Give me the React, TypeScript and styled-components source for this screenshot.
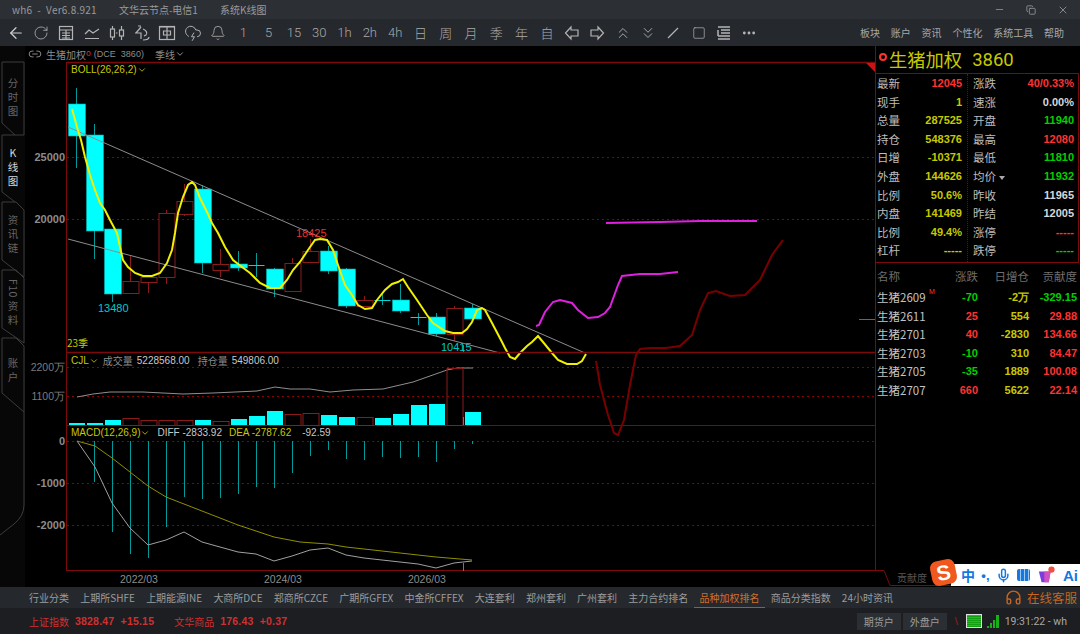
import styled, { createGlobalStyle } from "styled-components";
import {
    ArrowLeft, Bell, ChevronDown, ChevronsDown, ChevronsUp, CloudLightning, Copy, Ellipsis,
    Headphones, Link2, Mic, Minus, RotateCw, Square, X,
} from "lucide-react";

const RED = "#ff3232";
const GREEN = "#00d000";
const YELLOW = "#c8c800";
const WHITE = "#d8d8d8";
const FRAME = "#7d0a0a";
const GRID = "#8b0000";
const CJK = `"Noto Sans CJK SC", "Noto Sans", sans-serif`;
const NUM = `"Liberation Sans", Arial, sans-serif`;

type Candle = { kind: "up" | "down" | "flat"; top: number; bottom: number; high: number; low: number; vol: number; macd: number };

const candles: Candle[] = [
    { kind: "down", top: 104, bottom: 136, high: 88, low: 168, vol: 423, macd: 441 },
    { kind: "down", top: 135, bottom: 231, high: 124, low: 259, vol: 423, macd: 482 },
    { kind: "down", top: 229, bottom: 294, high: 229, low: 302, vol: 420, macd: 532 },
    { kind: "up", top: 281, bottom: 293, high: 256, low: 293, vol: 418, macd: 554 },
    { kind: "up", top: 277, bottom: 282, high: 277, low: 293, vol: 420, macd: 558 },
    { kind: "up", top: 213, bottom: 277, high: 210, low: 284, vol: 420, macd: 527 },
    { kind: "up", top: 201, bottom: 214, high: 184, low: 216, vol: 420, macd: 497 },
    { kind: "down", top: 189, bottom: 263, high: 185, low: 273, vol: 420, macd: 499 },
    { kind: "up", top: 264, bottom: 270, high: 249, low: 277, vol: 421, macd: 498 },
    { kind: "down", top: 264, bottom: 268, high: 251, low: 271, vol: 419, macd: 494 },
    { kind: "flat", top: 265, bottom: 265, high: 253, low: 277, vol: 416, macd: 487 },
    { kind: "down", top: 269, bottom: 289, high: 268, low: 297, vol: 411, macd: 488 },
    { kind: "up", top: 263, bottom: 291, high: 258, low: 292, vol: 414, macd: 473 },
    { kind: "up", top: 251, bottom: 262, high: 239, low: 263, vol: 413, macd: 456 },
    { kind: "down", top: 251, bottom: 271, high: 246, low: 274, vol: 415, macd: 450 },
    { kind: "down", top: 269, bottom: 306, high: 268, low: 308, vol: 417, macd: 459 },
    { kind: "up", top: 300, bottom: 306, high: 296, low: 306, vol: 417, macd: 460 },
    { kind: "flat", top: 300, bottom: 300, high: 293, low: 305, vol: 418, macd: 457 },
    { kind: "down", top: 300, bottom: 311, high: 284, low: 313, vol: 414, macd: 458 },
    { kind: "flat", top: 317, bottom: 317, high: 313, low: 325, vol: 405, macd: 457 },
    { kind: "down", top: 317, bottom: 334, high: 313, low: 336, vol: 404, macd: 462 },
    { kind: "up", top: 308, bottom: 334, high: 306, low: 341, vol: 368, macd: 449 },
    { kind: "down", top: 308, bottom: 319, high: 304, low: 319, vol: 412, macd: 444 },
];

const cx = (i: number) => 76.5 + i * 18;

const bollLine = "72,109 77,127 81,140 85,157 90,175 95,190 100,203 105,210 110,220 117,233 120,247 123,260 128,267 135,273 143,276 152,276 160,273 167,263 172,250 175,233 178,213 183,197 188,185 192,182 195,185 200,198 207,212 212,223 218,233 225,247 233,260 242,267 250,273 260,283 270,288 280,288 287,280 293,270 300,262 308,250 315,240 320,239 327,240 333,250 338,265 345,285 352,295 358,305 365,309 372,308 377,300 385,290 392,284 398,282 403,279 408,287 417,300 427,315 433,323 445,331 453,333 462,333 467,329 472,322 477,310 482,308 485,310 492,323 502,342 505,348 510,357 515,359 520,353 527,346 532,342 538,336 543,342 552,353 558,360 567,364 577,364 582,361 586,354";
const magentaLong = "536,326 539,325 545,312 553,302 560,300 572,303 578,310 588,318 598,317 605,313 610,307 618,285 622,276 640,274 660,274 678,272";
const magentaFlat = "606,223 660,222 700,221 757,221";
const darkRedLine = "596,361 600,385 608,415 614,433 618,435 624,420 630,385 636,355 640,349 650,348 666,348 680,346 692,335 700,310 708,293 716,291 730,296 745,295 760,280 772,255 783,240";
const holdLine = "77,397 93,394 110,392 143,392 183,394 213,393 257,391 275,387 290,389 310,389 330,392 353,390 383,389 413,382 447,370 457,368 473,368";
const diffLine = "77,441 95,467 112,503 130,528 148,545 166,540 184,532 202,542 220,547 238,552 256,554 274,561 292,556 310,550 328,548 346,555 364,558 400,562 418,564 436,568 454,563 472,561";
const deaLine = "77,441 95,446 112,458 130,472 148,486 166,497 184,504 220,518 238,525 274,537 300,542 328,544 346,547 382,551 418,555 436,557 472,560";

const leftQuotes = [
    ["最新", "12045", RED], ["现手", "1", YELLOW], ["总量", "287525", YELLOW], ["持仓", "548376", YELLOW], ["日增", "-10371", YELLOW],
    ["外盘", "144626", YELLOW], ["比例", "50.6%", YELLOW], ["内盘", "141469", YELLOW], ["比例", "49.4%", YELLOW], ["杠杆", "-----", YELLOW],
];
const rightQuotes = [
    ["涨跌", "40/0.33%", RED], ["速涨", "0.00%", WHITE], ["开盘", "11940", GREEN], ["最高", "12080", RED], ["最低", "11810", GREEN],
    ["均价", "11932", GREEN], ["昨收", "11965", WHITE], ["昨结", "12005", WHITE], ["涨停", "-----", RED], ["跌停", "-----", GREEN],
];
const contracts = [
    ["生猪2609", "-70", GREEN, "-2万", "-329.15", GREEN],
    ["生猪2611", "25", RED, "554", "29.88", RED],
    ["生猪2701", "40", RED, "-2830", "134.66", RED],
    ["生猪2703", "-10", GREEN, "310", "84.47", RED],
    ["生猪2705", "-35", GREEN, "1889", "100.08", RED],
    ["生猪2707", "660", RED, "5622", "22.14", RED],
];
const periods = ["1", "5", "15", "30", "1h", "2h", "4h", "日", "周", "月", "季", "年", "自"];
const menus = ["板块", "账户", "资讯", "个性化", "系统工具", "帮助"];
const bottomTabs = ["行业分类", "上期所SHFE", "上期能源INE", "大商所DCE", "郑商所CZCE", "广期所GFEX", "中金所CFFEX", "大连套利", "郑州套利", "广州套利", "主力合约排名", "品种加权排名", "商品分类指数", "24小时资讯"];

function Glyph({ children }: { children: React.ReactNode }) {
    return <svg width="20" height="20" viewBox="0 0 20 20" fill="none" stroke="#b4b4b4" strokeWidth="1.2">{children}</svg>;
}

const toolIcons = [
    <ArrowLeft size={18} color="#d0d0d0" strokeWidth={1.6}/>,
    <RotateCw size={16} color="#b4b4b4" strokeWidth={1.2}/>,
    <Glyph><rect x="3.5" y="3.5" width="13" height="13"/><path d="M3.5 7h13M6 10h8M6 12.5h8M6 15h8M10 7v9"/></Glyph>,
    <Glyph><path d="M3 11l4-4 4 3 6-4M3 15.5h14"/></Glyph>,
    <Glyph><rect x="3.5" y="6" width="4" height="8"/><path d="M5.5 3v3M5.5 14v3M14.500 3v4M14.500 13v4"/><rect x="12.500" y="7" width="4" height="6"/><path d="M9 10h1.500"/></Glyph>,
    <Glyph><path d="M4 10l5-6M9 3h-3M3 10h6v6M11 6c3 1 5 4 3 6l-2 1M11 17c3 0 6-1 6-3"/></Glyph>,
    <Glyph><rect x="2.500" y="3.500" width="15" height="13"/><path d="M10 4v12M6.500 8h7v4h-7zM3 4h14"/></Glyph>,
    <CloudLightning size={18} color="#b4b4b4" strokeWidth={1.3}/>,
    <Bell size={16} color="#b4b4b4" strokeWidth={1.2}/>,
];
const drawIcons = [
    <Glyph><path d="M9 4L3.500 10 9 16v-3h7V7H9z"/></Glyph>,
    <Glyph><path d="M11 4l5.500 6L11 16v-3H4V7h7z"/></Glyph>,
    <ChevronsUp size={18} color="#b4b4b4" strokeWidth={1.2}/>,
    <ChevronsDown size={18} color="#b4b4b4" strokeWidth={1.2}/>,
    <Glyph><path d="M5 15L15 5"/></Glyph>,
    <Square size={14} color="#b4b4b4" strokeWidth={1.2}/>,
    <Glyph><path d="M4 4h12M7 7h9M7 10h9M4 13h12M4 16h12M4 7v6" strokeWidth="1.500"/></Glyph>,
    <Ellipsis size={16} color="#b4b4b4" strokeWidth={2.200}/>,
];

function App() {
    return (
        <Window>
            <GlobalStyle/>
            <TitleBar>
                <TitleText $wide>wh6&nbsp; - &nbsp;Ver6.8.921</TitleText>
                <TitleText>文华云节点-电信1</TitleText>
                <TitleText>系统K线图</TitleText>
                <WindowButtons>
                    <Minus size={11} color="#888"/>
                    <Copy size={10} color="#999"/>
                    <X size={12} color="#888"/>
                </WindowButtons>
            </TitleBar>
            <ToolBar>
                {toolIcons.map((icon, i) => <ToolButton key={i}>{icon}</ToolButton>)}
                {periods.map(p => <ToolButton key={p}>{p}</ToolButton>)}
                {drawIcons.map((icon, i) => <ToolButton key={i}>{icon}</ToolButton>)}
                <MenuList>
                    {menus.map(m => <span key={m}>{m}</span>)}
                </MenuList>
            </ToolBar>
            <Main>
                <SideColumn>
                    <SideOutline viewBox="0 0 25 541">
                        <path d="M24 89V16H2V77L15 89"/>
                        <path d="M24 89H2V146L15 156"/>
                        <path d="M2 156H16l8 8V231L2 214V156"/>
                        <path d="M2 224H16l8 8V297L2 282V224"/>
                        <path d="M2 292H16l8 8V366L2 347V292"/>
                        <path d="M24 366V459Q24 470 14 478L0 489"/>
                    </SideOutline>
                    <SideTab $height={73}>分时图</SideTab>
                    <SideTab $height={67} $active><Upright>K</Upright>线图</SideTab>
                    <SideTab $height={68}>资讯链</SideTab>
                    <SideTab $height={68}><Tight>F10</Tight>资料</SideTab>
                    <SideTab $height={68}>账户</SideTab>
                </SideColumn>
                <ChartColumn>
                    <StockLine>
                        <Link2 size={14} color="#999" strokeWidth={1.5}/>
                        <StockName>生猪加权<sup>o</sup></StockName>
                        <StockCode>(DCE&nbsp; 3860)</StockCode>
                        <StockPeriod>季线<ChevronDown size={10} color="#aaa"/></StockPeriod>
                    </StockLine>
                    <Pane $height={290}>
                        <PaneSvg viewBox="25 62 850 290">
                            <line x1="66" x2="875" y1="62.500" y2="62.500" stroke={FRAME} strokeWidth="1.500"/>
                            <line x1="66.500" x2="66.500" y1="62" y2="352" stroke={FRAME}/>
                            <GridLine y={157}/><GridLine y={219}/>
                            <AxisLabel x={65} y={161}>25000</AxisLabel>
                            <AxisLabel x={65} y={223}>20000</AxisLabel>
                            <path d="M866 63h9v9z" fill="#c81414"/>
                            <line x1="859" x2="875" y1="319.500" y2="319.500" stroke="#666"/>
                            {candles.map((c, i) => <CandleMark key={i} c={c} x={cx(i)}/>)}
                            <line x1="463.500" x2="463.500" y1="345" y2="352" stroke="#777"/>
                            <line x1="68" y1="127" x2="585" y2="353" stroke="#8c8c8c"/>
                            <line x1="68" y1="239" x2="500" y2="353" stroke="#8c8c8c"/>
                            <polyline points={bollLine} fill="none" stroke="#f0f000" strokeWidth="2"/>
                            <PriceTag x={98} y={312} fill="#00c8c8">13480</PriceTag>
                            <PriceTag x={296} y={237} fill="#e83030">18425</PriceTag>
                            <PriceTag x={441} y={351} fill="#00c8c8">10415</PriceTag>
                        </PaneSvg>
                        <BollLegend>BOLL(26,26,2)<ChevronDown size={10}/></BollLegend>
                        <PeriodTag>23季</PeriodTag>
                    </Pane>
                    <Pane $height={74}>
                        <PaneSvg viewBox="25 352 850 74">
                            <line x1="66" x2="875" y1="352.500" y2="352.500" stroke={FRAME} strokeWidth="1.500"/>
                            <line x1="66" x2="875" y1="425.500" y2="425.500" stroke={FRAME} strokeWidth="1.200"/>
                            <line x1="66.500" x2="66.500" y1="352" y2="426" stroke={FRAME}/>
                            <GridLine y={367}/><GridLine y={396}/>
                            <AxisLabel x={65} y={371} $light>2200万</AxisLabel>
                            <AxisLabel x={65} y={400} $light>1100万</AxisLabel>
                            <polyline points={holdLine} fill="none" stroke="#8f8f8f"/>
                            {candles.map((c, i) => c.kind === "up"
                                ? <rect key={i} x={cx(i) - 7.500} y={c.vol + .5} width={16} height={425 - c.vol} fill="none" stroke="#8b1a1a"/>
                                : <rect key={i} x={cx(i) - 7.500} y={c.vol} width={16} height={425 - c.vol} fill="#00ffff"/>)}
                            <line x1="463.500" x2="463.500" y1="417" y2="425" stroke="#777"/>
                        </PaneSvg>
                        <VolumeLegend>
                            <LegendName>CJL<ChevronDown size={10}/></LegendName>
                            <LegendGrey>成交量</LegendGrey><LegendWhite>5228568.00</LegendWhite>
                            <LegendGrey $far>持仓量</LegendGrey><LegendWhite>549806.00</LegendWhite>
                        </VolumeLegend>
                    </Pane>
                    <Pane $height={145}>
                        <PaneSvg viewBox="25 426 850 145">
                            <line x1="66.500" x2="66.500" y1="426" y2="571" stroke={FRAME}/>
                            <line x1="66" x2="875" y1="570.500" y2="570.500" stroke={FRAME} strokeWidth="1.200"/>
                            <GridLine y={441}/><GridLine y={483}/><GridLine y={525}/>
                            <AxisLabel x={65} y={445}>0</AxisLabel>
                            <AxisLabel x={65} y={487}>-1000</AxisLabel>
                            <AxisLabel x={65} y={529}>-2000</AxisLabel>
                            {candles.slice(1).map((c, i) => <line key={i} x1={cx(i + 1)} x2={cx(i + 1)} y1="441" y2={c.macd} stroke="#009a9a"/>)}
                            <polyline points={diffLine} fill="none" stroke="#a0a0a0"/>
                            <polyline points={deaLine} fill="none" stroke="#8f8f00"/>
                            <line x1="463.500" x2="463.500" y1="563" y2="571" stroke="#777"/>
                        </PaneSvg>
                        <MacdLegend>
                            <LegendName>MACD(12,26,9)<ChevronDown size={10}/></LegendName>
                            <LegendWhite>DIFF -2833.92</LegendWhite>
                            <LegendName>DEA -2787.62</LegendName>
                            <LegendWhite>-92.59</LegendWhite>
                        </MacdLegend>
                    </Pane>
                    <TimeAxis>
                        <span>2022/03</span><span>2024/03</span><span>2026/03</span>
                    </TimeAxis>
                    <Annotations viewBox="25 46 850 541">
                        <polyline points={magentaLong} fill="none" stroke="#e020e0" strokeWidth="2"/>
                        <polyline points={magentaFlat} fill="none" stroke="#e020e0" strokeWidth="2"/>
                        <polyline points={darkRedLine} fill="none" stroke="#7a0000" strokeWidth="2"/>
                    </Annotations>
                </ChartColumn>
                <QuotePanel>
                    <QuoteHead>
                        <RedDot/>
                        <QuoteName>生猪加权</QuoteName>
                        <QuoteCode>3860</QuoteCode>
                    </QuoteHead>
                    <QuoteBox>
                        <QuoteColumn>
                            {leftQuotes.map(([name, value, color], i) => (
                                <QuoteRow key={i}><QuoteLabel>{name}</QuoteLabel><QuoteValue $color={color}>{value}</QuoteValue></QuoteRow>
                            ))}
                        </QuoteColumn>
                        <QuoteColumn $divider>
                            {rightQuotes.map(([name, value, color], i) => (
                                <QuoteRow key={i}>
                                    <QuoteLabel>{name}{name === "均价" && <Caret/>}</QuoteLabel>
                                    <QuoteValue $color={color}>{value}</QuoteValue>
                                </QuoteRow>
                            ))}
                        </QuoteColumn>
                    </QuoteBox>
                    <ContractTable>
                        <ContractHead>
                            <span>名称</span><span>涨跌</span><span>日增仓</span><span>贡献度</span>
                        </ContractHead>
                        {contracts.map(([name, change, changeColor, added, weight, weightColor], i) => (
                            <ContractRow key={name}>
                                <ContractName>{name}{i === 0 && <MainMark>M</MainMark>}</ContractName>
                                <QuoteValue $color={changeColor}>{change}</QuoteValue>
                                <QuoteValue $color={YELLOW}>{added}</QuoteValue>
                                <QuoteValue $color={weightColor}>{weight}</QuoteValue>
                            </ContractRow>
                        ))}
                    </ContractTable>
                    <PanelFoot>
                        <FootTab viewBox="0 0 75 17"><path d="M0 .5H8L14 15.500H75" fill="none" stroke={FRAME}/></FootTab>
                        <FootLabel>贡献度</FootLabel>
                    </PanelFoot>
                </QuotePanel>
                <ImeBar>
                    <ImeLogo><span>S</span></ImeLogo>
                    <ImeHan>中</ImeHan>
                    <ImePunct>•,</ImePunct>
                    <Mic size={15} color="#1478e0" strokeWidth={2.400}/>
                    <ImeKeys/>
                    <ImeShape viewBox="0 0 22 20">
                        <path d="M2 6h13l-2 12H5z" fill="#7a3ce0"/>
                        <path d="M8 6h7l-2 12H8z" fill="#d050c0"/>
                        <circle cx="16" cy="4" r="3.500" fill="#f05040"/>
                    </ImeShape>
                    <ImeAi>Ai</ImeAi>
                </ImeBar>
            </Main>
            <BottomTabs>
                {bottomTabs.map(t => <BottomTab key={t} $active={t === "品种加权排名"}>{t}</BottomTab>)}
                <ServiceLink><Headphones size={17} strokeWidth={2}/>在线客服</ServiceLink>
            </BottomTabs>
            <StatusBar>
                <IndexText>上证指数</IndexText>
                <IndexNumber>3828.47&nbsp; +15.15</IndexNumber>
                <IndexText $wide>文华商品</IndexText>
                <IndexNumber>176.43&nbsp; +0.37</IndexNumber>
                <StatusRight>
                    <AccountButton>期货户</AccountButton>
                    <AccountButton>外盘户</AccountButton>
                    <Backslash>\</Backslash>
                    <NetBox/>
                    <Signal viewBox="0 0 14 14">
                        <path d="M1 12h2v2H1zM4 9h2v5H4zM7 6h2v8H7zM10 1h3v13h-3z" fill="#18b018"/>
                    </Signal>
                    <Clock>19:31:22 - wh</Clock>
                </StatusRight>
            </StatusBar>
        </Window>
    );
}

function GridLine({ y }: { y: number }) {
    return <line x1="67" x2="875" y1={y + .5} y2={y + .5} stroke={GRID} strokeDasharray="2 3"/>;
}

function AxisLabel({ x, y, $light, children }: { x: number; y: number; $light?: boolean; children: React.ReactNode }) {
    return (
        <text x={x} y={y} textAnchor="end" fontFamily={NUM} fontSize={$light ? 10.5 : 11} fontWeight={$light ? 400 : 700} fill={$light ? "#7c7c7c" : "#8c8c8c"}>
            {children}
        </text>
    );
}

function PriceTag({ x, y, fill, children }: { x: number; y: number; fill: string; children: React.ReactNode }) {
    return <text x={x} y={y} fontFamily={NUM} fontSize="11" fill={fill}>{children}</text>;
}

function CandleMark({ c, x }: { c: Candle; x: number }) {
    if (c.kind === "flat") {
        return (
            <g stroke="#00d8d8">
                <line x1={x} x2={x} y1={c.high} y2={c.low} stroke="#009a9a"/>
                <line x1={x - 8} x2={x + 8} y1={c.top + .5} y2={c.top + .5}/>
            </g>
        );
    }
    if (c.kind === "up") {
        return (
            <g stroke="#8b1a1a">
                <line x1={x} x2={x} y1={c.high} y2={c.low}/>
                <rect x={x - 7.500} y={c.top + .5} width={16} height={c.bottom - c.top} fill="#000"/>
            </g>
        );
    }
    return (
        <g>
            <line x1={x} x2={x} y1={c.high} y2={c.low} stroke="#009a9a"/>
            <rect x={x - 8} y={c.top} width={17} height={c.bottom - c.top} fill="#00ffff" stroke="#00b0b0" strokeWidth=".6"/>
        </g>
    );
}

const GlobalStyle = createGlobalStyle`
    html, body {
        margin: 0;
        background: #000;
        overflow: hidden;
    }
`;

const Window = styled.div`
    width: 1080px;
    height: 634px;
    display: flex;
    flex-direction: column;
    font-family: ${CJK};
`;

const TitleBar = styled.div`
    height: 19px;
    background: #2c2f34;
    display: flex;
    align-items: center;
    padding-left: 12px;
    gap: 22px;
    color: #9a9a9a;
`;

const TitleText = styled.span<{ $wide?: boolean }>`
    font-size: 10px;
    white-space: nowrap;
    letter-spacing: ${p => p.$wide ? ".25px" : "0"};
`;

const WindowButtons = styled.div`
    margin-left: auto;
    display: flex;
    align-items: center;
    gap: 21px;
    padding-right: 11px;
`;

const ToolBar = styled.div`
    height: 27px;
    background: #25282d;
    display: flex;
    align-items: center;
    padding-left: 3px;
    color: #aaa;
`;

const ToolButton = styled.div`
    flex: 0 0 25.300px;
    height: 27px;
    display: flex;
    align-items: center;
    justify-content: center;
    font-family: "Roboto", ${CJK};
    font-size: 13px;
    font-weight: 300;
`;

const MenuList = styled.div`
    margin-left: auto;
    display: flex;
    gap: 10.800px;
    padding-right: 16px;
    font-size: 10px;
    color: #a8a8a8;
`;

const Main = styled.div`
    position: relative;
    height: 541px;
    display: flex;
    background: #000;
`;

const SideColumn = styled.div`
    position: relative;
    flex: 0 0 25px;
    padding-top: 16px;
    background: #070707;
`;

const SideOutline = styled.svg`
    position: absolute;
    left: 0;
    top: 0;
    width: 25px;
    height: 541px;
    fill: none;
    stroke: #3c3c3c;
`;

const SideTab = styled.div<{ $height: number; $active?: boolean }>`
    position: relative;
    box-sizing: border-box;
    width: 25px;
    height: ${p => p.$height}px;
    display: flex;
    align-items: center;
    justify-content: center;
    padding-left: 1px;
    writing-mode: vertical-rl;
    letter-spacing: 3.500px;
    font-size: 10.500px;
    color: ${p => p.$active ? "#d8d8d8" : "#666"};
`;

const Upright = styled.span`
    text-orientation: upright;
`;

const Tight = styled.span`
    margin-bottom: 3px;
    letter-spacing: .5px;
`;

const ChartColumn = styled.div`
    position: relative;
    flex: 0 0 850px;
    display: flex;
    flex-direction: column;
`;

const StockLine = styled.div`
    height: 16px;
    display: flex;
    align-items: center;
    padding-left: 3px;
    color: #8c8c8c;
    font-size: 10px;
`;

const StockName = styled.span`
    margin-left: 4px;
    font-family: "Noto Sans CJK SC", serif;

    sup {
        color: #d03030;
        font-size: 8px;
        line-height: 0;
        vertical-align: 3px;
    }
`;

const StockCode = styled.span`
    margin-left: 3px;
    font-family: ${NUM};
    font-size: 9px;
`;

const StockPeriod = styled.span`
    margin-left: 11px;
    display: flex;
    align-items: center;
`;

const Pane = styled.div<{ $height: number }>`
    position: relative;
    height: ${p => p.$height}px;
`;

const PaneSvg = styled.svg`
    display: block;
    width: 850px;
    height: 100%;
    overflow: visible;
`;

const Legend = styled.div`
    position: absolute;
    left: 46px;
    display: flex;
    align-items: center;
    white-space: nowrap;
    font-family: ${NUM};
    font-size: 10px;
    color: ${YELLOW};
`;

const BollLegend = styled(Legend)`
    top: 2px;
`;

const PeriodTag = styled(Legend)`
    left: 42px;
    bottom: 2px;
    font-family: ${CJK};
`;

const VolumeLegend = styled(Legend)`
    top: 1px;
    gap: 4px;
`;

const MacdLegend = styled(Legend)`
    top: 1px;
    gap: 7px;

    > :last-child {
        margin-left: 4px;
    }
`;

const LegendName = styled.span`
    display: flex;
    align-items: center;
    color: ${YELLOW};
`;

const LegendGrey = styled.span<{ $far?: boolean }>`
    color: #8c8c8c;
    margin-left: ${p => p.$far ? "4px" : "0"};
    font-family: ${CJK};
`;

const LegendWhite = styled.span`
    color: #c8c8c8;
`;

const TimeAxis = styled.div`
    height: 16px;
    padding-left: 95px;
    display: flex;
    gap: 106px;
    align-items: center;
    font-family: ${NUM};
    font-size: 10.500px;
    color: #8c8c8c;
`;

const Annotations = styled.svg`
    position: absolute;
    left: 0;
    top: 0;
    width: 850px;
    height: 541px;
    pointer-events: none;
`;

const QuotePanel = styled.div`
    flex: 0 0 205px;
    display: flex;
    flex-direction: column;
    border-left: 1px solid ${FRAME};
    box-sizing: border-box;
    height: 525px;
`;

const QuoteHead = styled.div`
    height: 27px;
    display: flex;
    align-items: center;
    padding-left: 3px;
    color: ${YELLOW};
`;

const RedDot = styled.span`
    width: 4px;
    height: 4px;
    margin-top: -5px;
    border: 2px solid ${RED};
    border-radius: 50%;
`;

const QuoteName = styled.span`
    margin-left: 2px;
    font-size: 18.300px;
    line-height: 1;
`;

const QuoteCode = styled.span`
    margin-left: 10px;
    font-family: "Roboto", ${NUM};
    font-size: 18.500px;
`;

const QuoteBox = styled.div`
    width: 203px;
    height: 190px;
    box-sizing: border-box;
    border: 1px solid ${FRAME};
    border-left: 0;
    display: flex;
`;

const QuoteColumn = styled.div<{ $divider?: boolean }>`
    box-sizing: border-box;
    flex: ${p => p.$divider ? "0 0 111px" : "0 0 91px"};
    padding: 0 ${p => p.$divider ? 4 : 5}px 0 ${p => p.$divider ? 5 : 1}px;
    display: flex;
    flex-direction: column;
    border-left: ${p => p.$divider ? `1px dotted ${GRID}` : "none"};
`;

const QuoteRow = styled.div`
    flex: 0 0 18.550px;
    display: flex;
    justify-content: space-between;
    align-items: center;
`;

const QuoteLabel = styled.span`
    display: flex;
    align-items: center;
    font-size: 11.500px;
    color: #bdbdbd;
`;

const Caret = styled.i`
    margin: 3px 0 0 3px;
    border: 3.500px solid transparent;
    border-top: 4px solid #aaa;
    border-bottom: 0;
`;

const QuoteValue = styled.span<{ $color: string }>`
    font-family: ${NUM};
    font-size: 11px;
    font-weight: 700;
    color: ${p => p.$color};
    text-align: right;
    white-space: nowrap;
`;

const ContractTable = styled.div`
    padding: 3px 2px 0 1px;
`;

const contractGrid = `
    display: grid;
    grid-template-columns: 54px 47px 51px 48px;
    align-items: center;
`;

const ContractHead = styled.div`
    ${contractGrid}
    height: 19px;
    margin-bottom: 3px;
    font-size: 11.500px;
    color: #6e6e6e;
    text-align: right;

    span:first-child {
        text-align: left;
    }
`;

const ContractRow = styled.div`
    ${contractGrid}
    height: 18.500px;
`;

const ContractName = styled.span`
    position: relative;
    font-family: ${CJK};
    font-size: 11.500px;
    color: #c4c4c4;
    white-space: nowrap;
`;

const MainMark = styled.sup`
    position: absolute;
    left: 52px;
    top: -1px;
    font-family: ${NUM};
    font-size: 7px;
    line-height: 1;
    color: ${RED};
`;

const PanelFoot = styled.div`
    position: relative;
    margin-top: auto;
    height: 0;
`;

const FootTab = styled.svg`
    position: absolute;
    left: 0;
    top: -1px;
    width: 75px;
    height: 17px;
`;

const FootLabel = styled.span`
    position: absolute;
    left: 21px;
    top: 0;
    font-size: 10px;
    line-height: 14px;
    color: #555;
`;

const ImeBar = styled.div`
    position: absolute;
    left: 951px;
    top: 518px;
    width: 129px;
    height: 22px;
    box-sizing: border-box;
    padding: 0 2px 0 10px;
    background: #fff;
    display: flex;
    align-items: center;
    justify-content: space-between;
`;

const ImeLogo = styled.div`
    position: absolute;
    left: -20px;
    top: -4px;
    width: 25px;
    height: 25px;
    display: flex;
    align-items: center;
    justify-content: center;
    background: #f0581e;
    border-radius: 7px;
    transform: rotate(-12deg);

    span {
        font-family: ${NUM};
        font-size: 21px;
        font-weight: 700;
        color: #fff;
    }
`;

const ImeHan = styled.span`
    font-size: 14px;
    font-weight: 700;
    color: #1478e0;
`;

const ImePunct = styled.span`
    font-family: ${NUM};
    font-size: 13px;
    font-weight: 700;
    color: #1478e0;
`;

const ImeKeys = styled.span`
    width: 13px;
    height: 12px;
    border-radius: 2px;
    background: repeating-linear-gradient(90deg, #1478e0 0 3px, #9cc8f4 3px 4px);
`;

const ImeShape = styled.svg`
    width: 20px;
    height: 18px;
`;

const ImeAi = styled.span`
    font-family: ${NUM};
    font-size: 15px;
    font-weight: 700;
    color: #1478e0;
`;

const BottomTabs = styled.div`
    height: 21px;
    box-sizing: border-box;
    background: #25292e;
    display: flex;
    align-items: stretch;
    padding-left: 23.500px;
`;

const BottomTab = styled.div<{ $active?: boolean }>`
    padding: 0 5.600px;
    display: flex;
    align-items: center;
    font-size: 10px;
    white-space: nowrap;
    color: ${p => p.$active ? "#d0702a" : "#9c9c9c"};
    border-bottom: ${p => p.$active ? "1px solid #a05a28" : "1px solid transparent"};
`;

const ServiceLink = styled.div`
    margin-left: auto;
    padding-right: 3px;
    display: flex;
    align-items: center;
    gap: 5px;
    font-size: 12.500px;
    color: #c8641e;
`;

const StatusBar = styled.div`
    height: 26px;
    background: #1c1e22;
    display: flex;
    align-items: center;
    padding-left: 29px;
`;

const IndexText = styled.span<{ $wide?: boolean }>`
    font-size: 10px;
    color: #d03030;
    margin-left: ${p => p.$wide ? "20px" : "0"};
`;

const IndexNumber = styled.span`
    margin-left: 6px;
    font-family: ${NUM};
    font-size: 10.500px;
    font-weight: 700;
    letter-spacing: .2px;
    color: #d03030;
`;

const StatusRight = styled.div`
    margin-left: auto;
    display: flex;
    align-items: center;
    padding-right: 13px;
`;

const AccountButton = styled.div`
    width: 44px;
    height: 17px;
    margin-right: 2px;
    display: flex;
    align-items: center;
    justify-content: center;
    background: #2b2f34;
    font-size: 10px;
    color: #9c9c9c;
`;

const Backslash = styled.span`
    margin-left: 6px;
    font-family: ${NUM};
    font-size: 11px;
    color: #a02020;
`;

const NetBox = styled.span`
    margin-left: 8px;
    width: 14px;
    height: 12px;
    border: 1px solid #e0e0e0;
    background: repeating-linear-gradient(0deg, #12a012 0 1px, #20c020 1px 2px);
`;

const Signal = styled.svg`
    width: 14px;
    height: 14px;
    margin-left: 4px;
`;

const Clock = styled.span`
    margin-left: 5px;
    font-family: "Roboto", ${NUM};
    font-size: 10.500px;
    color: #a8a8a8;
`;

export default App;
